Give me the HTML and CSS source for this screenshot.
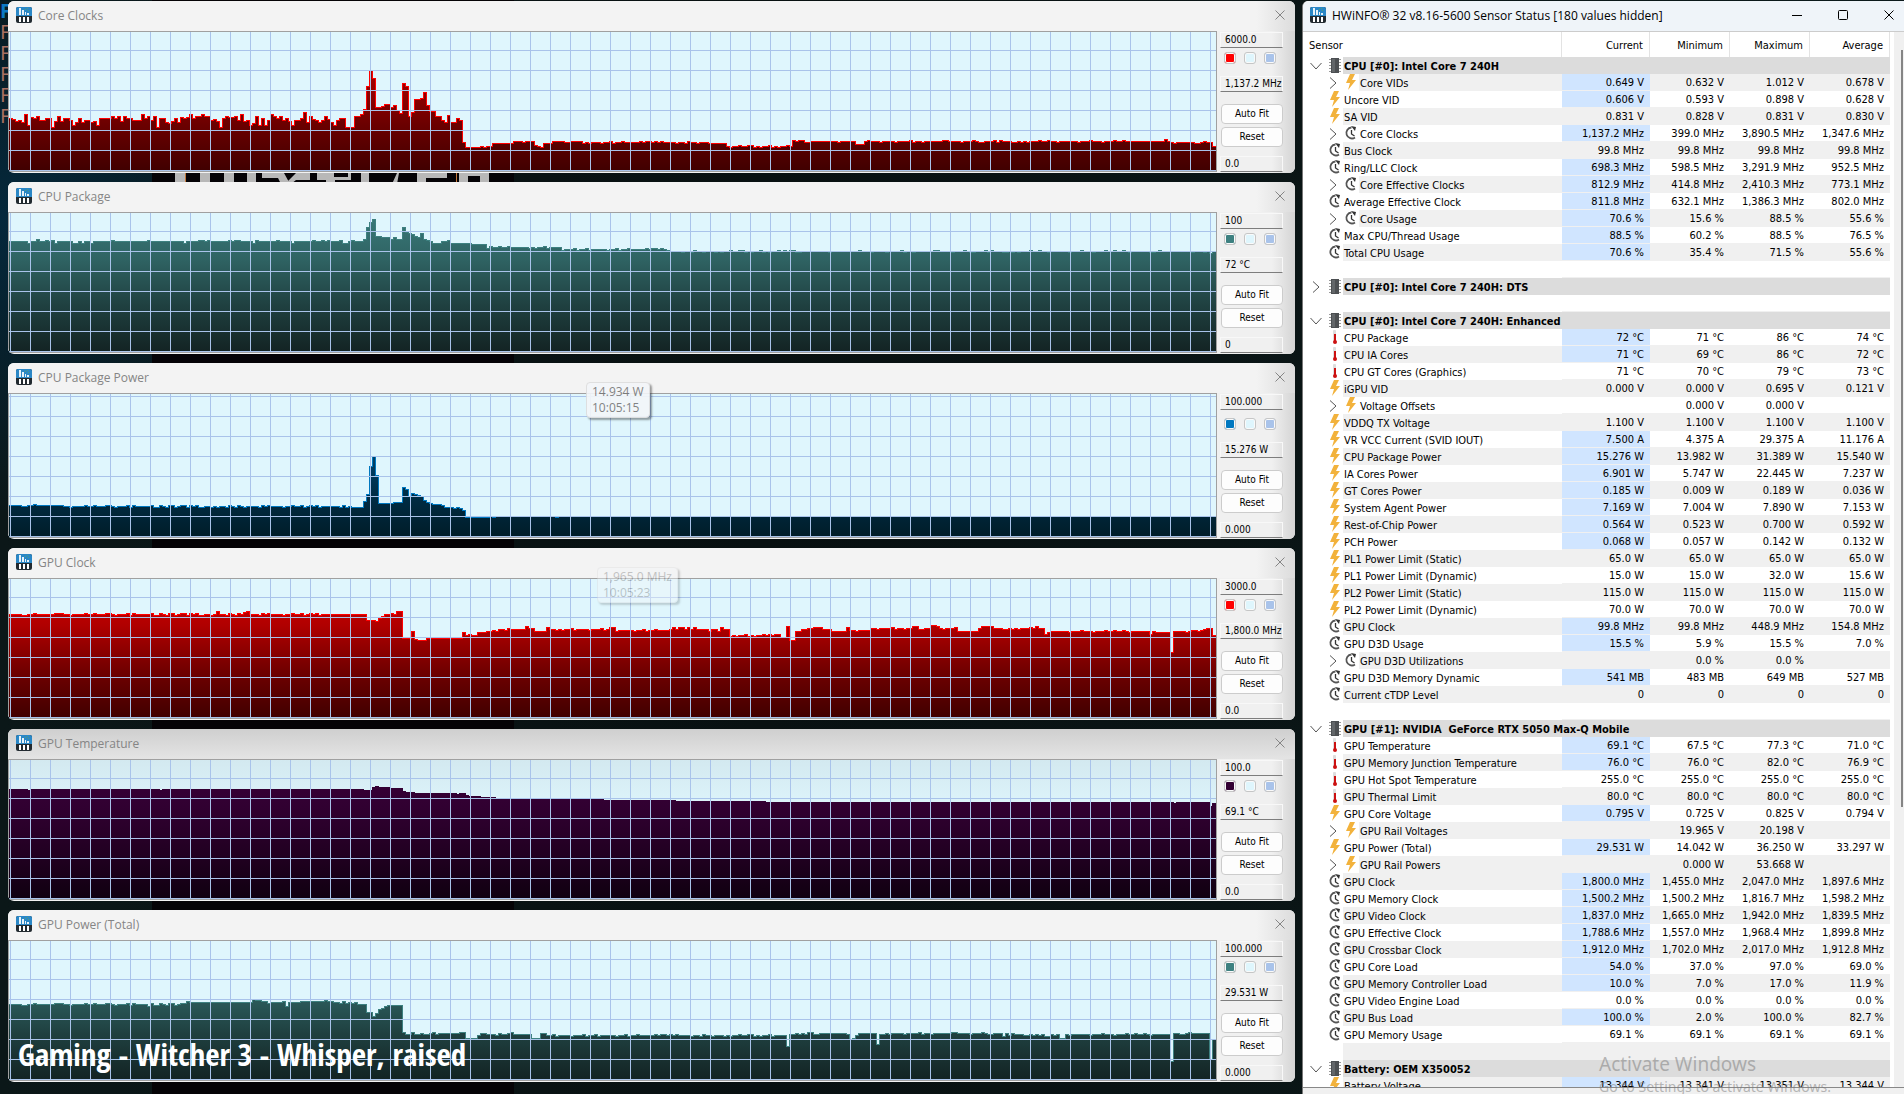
FILE: index.html
```html
<!DOCTYPE html>
<html lang="en">
<head>
  <meta charset="UTF-8">
  <title>HWiNFO Sensor Status</title>
  <meta name="viewport" content="width=device-width, initial-scale=1.0">
  <link rel="stylesheet" href="styles.css">
</head>
<body>
  <svg class="defs" aria-hidden="true">
    <symbol id="i-app" viewBox="0 0 16 16">
      <rect width="16" height="16" rx="2" fill="#222a30"/>
      <path d="M2 0h12a2 2 0 0 1 2 2v7H0V2a2 2 0 0 1 2-2z" fill="#2a87c6"/>
      <path d="M3 1h2v7H3zM6 3h2v5H6zM9 5h1v3H9zM11 6h2v2h-2z" fill="#e6f2fa"/>
      <path d="M3 10h2v5H3zM7 10h2v5H7zM11 10h2v5h-2z" fill="#fff"/>
      <path d="M9 2h1v1H9zM12 3h1v1h-1zM11 1h1v1h-1z" fill="#4f9e7a"/>
    </symbol>
    <symbol id="i-close" viewBox="0 0 10 10"><path d="M0.5 0.5l9 9M9.5 0.5l-9 9" fill="none" stroke="currentColor"/></symbol>
    <symbol id="i-min" viewBox="0 0 10 10"><path d="M0 5.5h10" fill="none" stroke="currentColor"/></symbol>
    <symbol id="i-max" viewBox="0 0 10 10"><rect x="0.5" y="0.5" width="9" height="9" rx="1" fill="none" stroke="currentColor"/></symbol>
    <symbol id="i-right" viewBox="0 0 12 12"><path d="M3 0.5l6 5.5-6 5.5" fill="none" stroke="#555"/></symbol>
    <symbol id="i-down" viewBox="0 0 12 12"><path d="M0.5 3l5.500 6 5.500-6" fill="none" stroke="#555"/></symbol>
    <symbol id="i-chip" viewBox="0 0 16 16">
      <path d="M2 2h12v1H2zM2 5h12v1H2zM2 8h12v1H2zM2 11h12v1H2zM2 14h12v1H2z" fill="#999"/>
      <rect x="4" y="1" width="8" height="15" fill="#4c4f52"/>
      <path d="M5 2h3v13H5z" fill="#626669"/>
    </symbol>
    <symbol id="i-volt" viewBox="0 0 16 16"><path d="M7 0h5L9 6h4L5 16l2-7H3z" fill="#f2b23c"/></symbol>
    <symbol id="i-clock" viewBox="0 0 16 16">
      <path d="M8.500 2.500A5.500 5.500 0 1 0 12 12.500" fill="none" stroke="#555" stroke-width="1.800"/>
      <path d="M8 1l5 1-1 4z" fill="#333"/>
      <path d="M8.500 5v4l3 2" fill="none" stroke="#333" stroke-width="1.300"/>
    </symbol>
    <symbol id="i-temp" viewBox="0 0 16 16">
      <rect x="6" y="1" width="3" height="11" rx="1" fill="#ddd"/>
      <path d="M7 5h2v7H7z" fill="#c11"/><circle cx="8" cy="13" r="2" fill="#c11"/>
    </symbol>
  </svg>

  <div class="wallpaper" aria-hidden="true">
    <div class="terminal"><span class="prompt">F</span><span>F</span><span>F</span><span>F</span><span>F</span><span>F</span></div>
    <svg class="lettering" viewBox="0 0 340 12">
      <path fill="#b8b8b8" d="M22 0h11v12H22zM47 0h10v12H47zM71 0h10v12H71zM94 0h9v12h-9zM109 1h22l6 11h-9l-3-6h-16zM143 1h14v7h-14l-5 4h-6zM164 1h17v4h14V1h3v7h-16v4h-9V8h-9zM208 0h8v12h-8zM246 1h-2l-5 11h5zM264 1h30v5h-21v6h-9zM306 0h30v12h-9V4h-12v8h-9z"/>
      <path fill="#c57a3c" d="M303 0h1v12h-1zM32 0h1v12h-1z"/>
    </svg>
  </div>

  <main class="desktop">
    <div class="graphs" id="graphs"></div>

    <section class="sensors">
      <header class="sensors-title">
        <svg class="app-icon"><use href="#i-app"/></svg>
        <h1>HWiNFO® 32 v8.16-5600 Sensor Status [180 values hidden]</h1>
        <button class="win-btn" aria-label="Minimize"><svg><use href="#i-min"/></svg></button>
        <button class="win-btn" aria-label="Maximize"><svg><use href="#i-max"/></svg></button>
        <button class="win-btn" aria-label="Close"><svg><use href="#i-close"/></svg></button>
      </header>
      <div class="sensors-body">
        <div class="list">
          <table>
            <thead>
              <tr><th>Sensor</th><th>Current</th><th>Minimum</th><th>Maximum</th><th>Average</th></tr>
            </thead>
            <tbody id="rows"></tbody>
          </table>
        </div>
        <div class="scrollbar"><div class="thumb"></div></div>
      </div>
      <div class="sensors-bottom"></div>
    </section>
  </main>

  <div class="tip tip-power">14.934 W<br>10:05:15</div>
  <div class="tip tip-clock">1,965.0 MHz<br>10:05:23</div>
  <div class="caption">Gaming - Witcher 3 - Whisper, raised</div>
  <div class="activate"><strong>Activate Windows</strong><span>Go to Settings to activate Windows.</span></div>

  <script>
    // Series: heights in pixels, one per 3px column.
    // "50x4" repeats, "50x4~2" repeats with noise, "@119" jumps to a column.
    const graphs = [
      {
        title: 'Core Clocks', max: '6000.0', value: '1,137.2 MHz', min: '0.0', color: '#ff0000',
        stops: ['#d80000', '#a00000', '#6b0000', '#400000'],
        data: '52 51 49 50 48 56 45 53 52 54 50 50 52 52 43 49 54 49 52 52 50 45 48 52 48 50 50 48 49 45 52x4 54 52 54 49 54 52x2 50x3 56 52 54 50 54 43 52x2 48 47 49 52 48 53 52 53 56 52 54x2 56 54x2 50 51 49 43 52 54 53x2 54 50 56 49 50 45 47 54 45 52 45 50 56 54 52 54 50 52 49 45 50x2 52 58 48 54 51 50 48 50 54 51 48 45 50 52x2 43 @114 43 54 54 56 56 @118 61 84 100 92 63x2 64 66x2 63 65 60 57x2 @131 87 84 54 58 71x2 72 78 65 59x2 54x2 50 48 55 48x2 52 50 48 @151 28 23x5 24 23 24x2 27x7 29x3 28 29x3 25 24 23 27x3 29x4 28x2 29x4 27 28 27 28x40~1 @239 24x22~1 @261 29x21~1 26x3 29x88~1 @385 31 28x14~1 @401 24 24'
      },
      {
        title: 'CPU Package', max: '100', value: '72 °C', min: '0', color: '#3d8080',
        stops: ['#3a7a7a', '#2f6363', '#1f4040', '#132323'],
        data: '110x6 108 110x2 112 110x2 111 110 111 108 110x5 108x2 110 108 110x2 108 110x6 111 110x11 111 110x11 108 110x4 111x2 110 111 110x6 111 110 111x2 110x4 108 111 110x6 111 110x4 108 110x6 111 110x2 111 110 111 110x3 111 108x2 110 111 110x2 @118 112 124 129 132 115 115 114x3 112 114 112x3 @131 124 119 118 117 115 114 118 112 111 110 108x3 110x2 111 108x7 107x5 104x25~1 102x35~1 100x207~1 @400 98 100'
      },
      {
        title: 'CPU Package Power', max: '100.000', value: '15.276 W', min: '0.000', color: '#0078c0', tall: true,
        stops: ['#0070b4', '#004a78', '#002f49', '#001c28'],
        data: '31x15~1 30x100~1 @118 35 42 70 80 61 33x5 34x2 @131 49 47 40 43 42 41 40 36 34 33 32x3 31 29x3 28 29 28 26 @152 19x8 20 19 20x20 19 20x220'
      },
      {
        title: 'GPU Clock', max: '3000.0', value: '1,800.0 MHz', min: '0.0', color: '#ff0000',
        stops: ['#d80000', '#b00000', '#700000', '#400000'],
        data: '103x60~1 104 103x8~1 106 103x8~1 105 106 103x30~1 @119 97x3 96 99 101 103x2 104 103 106x2 @131 79x3 86 78 77x3 79x12 85 82 83 82x2 85x3 86x2 87 86 88x2 87 89 88x5 91 89x2 86x4 90 88x20~1 90x2 87x18~1 88x34~2 @240 82x17~1 80 80 91 77 77 86x2 88x2 89x2 90x3 88x3 86x5 90 87x5~1 @287 89x14~1 91x2 88x4~1 92x2 91 89x6~1 86x4 @323 89 91x4 89x14~1 91 89x2 83 86x36~1 @380 83x1 85x6~1 @387 65 86x6~1 87x5~1 @399 89 89 82'
      },
      {
        title: 'GPU Temperature', max: '100.0', value: '69.1 °C', min: '0.0', color: '#330033', dim: true,
        stops: ['#3a003a', '#310031', '#220022', '#100010'],
        data: '109x6 108 109x43 108 109x67 @118 108x3 111 112 111x4 110x3 @131 107 106x3 105x14 104 105x2 103 102x4 101x5 @162 100x18 99x18 98x24 97x30 96x140 @388 95 96x11 @400 92 95'
      },
      {
        title: 'GPU Power (Total)', max: '100.000', value: '29.531 W', min: '0.000', color: '#3d8080',
        stops: ['#3a7a7a', '#2f6363', '#1f4040', '#132323'],
        data: '75x46~1 73 75x12~1 78 77x21~0 80 79x2 78x2 76 77x4~1 78 73 77x4 78x8 79 78x2 77x8~1 75 @119 67x2 63 66 70 71 73 74x4 @130 74 47 45x2 47 45x2 46x14~1 @152 41x4 44 45x10~1 47 45x6 41x3 46x2 44x77~1 @259 33 45x6~1 46x13~1 @279 45 40 41 44 46x6~1 35 45x2~1 46x38~1 @331 43 45x13~1 43x2 45 44 45 41x2 45x4~1 45x28~1 @387 18 46x12~1 @400 20 40'
      }
    ];

    const COLS = 403;

    function expand(data) {
      const out = [];
      let seed = 7;
      for (const token of data.split(' ')) {
        if (token[0] === '@') {
          const col = Number(token.slice(1));
          const last = out[out.length - 1];
          while (out.length < col) out.push(last);
          out.length = col;
          continue;
        }
        const [, h, n, noise] = token.match(/^(\d+)(?:x(\d+))?(?:~(\d+))?$/);
        for (let i = 0; i < Number(n || 1); i++) {
          seed = (seed * 1103515245 + 12345) % 2147483648;
          const r = Math.floor(seed / 65536) % 6;
          const d = r === 0 ? -1 : r === 1 ? 1 : 0;
          out.push(Number(h) + d * Number(noise || 0));
        }
      }
      while (out.length < COLS) out.push(out[out.length - 1]);
      return out.slice(0, COLS);
    }

    function gridLines(height) {
      let d = '';
      for (let x = 1; x < 1207; x += 20) d += `M${x} 0h1v${height}h-1z`;
      for (let y = height - 1; y >= 0; y -= 20) d += `M0 ${y}h1207v1H0z`;
      return d;
    }

    function plot(g, i) {
      const height = g.tall ? 143 : 139;
      const base = height - 1;
      let line = '';
      expand(g.data).forEach((h, c) => {
        const x = c * 3;
        line += `${c ? 'L' : 'M'}${x} ${base - h + 0.5}H${x + 3}`;
      });
      const stops = g.stops.map((s, n) => `<stop offset="${n / 3}" stop-color="${s}"/>`).join('');
      return `<svg class="plot" viewBox="0 0 1207 ${height}" preserveAspectRatio="none" height="${height}" role="img" aria-label="${g.title}">
        <linearGradient id="g${i}" gradientUnits="userSpaceOnUse" x1="0" y1="0" x2="0" y2="${height}">${stops}</linearGradient>
        <path d="${line}V${height}H0z" fill="url(#g${i})"/>
        <path d="${line}" fill="none" stroke="${g.color}"/>
        <path d="${gridLines(height)}" fill="#a9c3ea" fill-rule="nonzero"/>
      </svg>`;
    }

    document.getElementById('graphs').innerHTML = graphs.map((g, i) => `
      <section class="graph${g.dim ? ' graph-dim' : ''}">
        <header class="graph-title">
          <svg class="app-icon"><use href="#i-app"/></svg>
          <h2>${g.title}</h2>
          <button class="graph-close" aria-label="Close ${g.title}"><svg><use href="#i-close"/></svg></button>
        </header>
        <div class="graph-body">
          <div class="plot-frame">${plot(g, i)}</div>
          <div class="side">
            <input class="field" aria-label="${g.title} maximum" value="${g.max}">
            <div class="swatches">
              <button style="background: ${g.color}" aria-label="Graph color"></button>
              <button class="swatch-bg" aria-label="Background color"></button>
              <button class="swatch-grid" aria-label="Grid color"></button>
            </div>
            <input class="field value" aria-label="${g.title} value" value="${g.value}" readonly>
            <button class="btn">Auto Fit</button>
            <button class="btn reset">Reset</button>
            <input class="field low" aria-label="${g.title} minimum" value="${g.min}">
          </div>
        </div>
      </section>`).join('');

    // icon | name | current | minimum | maximum | average
    // "+" = expandable, "*" = current value changed, "#" = group, "" = spacer
    const sensors = `#down|CPU [#0]: Intel Core 7 240H
+*volt|Core VIDs|0.649 V|0.632 V|1.012 V|0.678 V
*volt|Uncore VID|0.606 V|0.593 V|0.898 V|0.628 V
volt|SA VID|0.831 V|0.828 V|0.831 V|0.830 V
+*clock|Core Clocks|1,137.2 MHz|399.0 MHz|3,890.5 MHz|1,347.6 MHz
clock|Bus Clock|99.8 MHz|99.8 MHz|99.8 MHz|99.8 MHz
*clock|Ring/LLC Clock|698.3 MHz|598.5 MHz|3,291.9 MHz|952.5 MHz
+*clock|Core Effective Clocks|812.9 MHz|414.8 MHz|2,410.3 MHz|773.1 MHz
*clock|Average Effective Clock|811.8 MHz|632.1 MHz|1,386.3 MHz|802.0 MHz
+*clock|Core Usage|70.6 %|15.6 %|88.5 %|55.6 %
*clock|Max CPU/Thread Usage|88.5 %|60.2 %|88.5 %|76.5 %
*clock|Total CPU Usage|70.6 %|35.4 %|71.5 %|55.6 %

#right|CPU [#0]: Intel Core 7 240H: DTS

#down|CPU [#0]: Intel Core 7 240H: Enhanced
*temp|CPU Package|72 °C|71 °C|86 °C|74 °C
*temp|CPU IA Cores|71 °C|69 °C|86 °C|72 °C
temp|CPU GT Cores (Graphics)|71 °C|70 °C|79 °C|73 °C
volt|iGPU VID|0.000 V|0.000 V|0.695 V|0.121 V
+volt|Voltage Offsets||0.000 V|0.000 V|
volt|VDDQ TX Voltage|1.100 V|1.100 V|1.100 V|1.100 V
*volt|VR VCC Current (SVID IOUT)|7.500 A|4.375 A|29.375 A|11.176 A
*volt|CPU Package Power|15.276 W|13.982 W|31.389 W|15.540 W
*volt|IA Cores Power|6.901 W|5.747 W|22.445 W|7.237 W
*volt|GT Cores Power|0.185 W|0.009 W|0.189 W|0.036 W
*volt|System Agent Power|7.169 W|7.004 W|7.890 W|7.153 W
*volt|Rest-of-Chip Power|0.564 W|0.523 W|0.700 W|0.592 W
*volt|PCH Power|0.068 W|0.057 W|0.142 W|0.132 W
volt|PL1 Power Limit (Static)|65.0 W|65.0 W|65.0 W|65.0 W
volt|PL1 Power Limit (Dynamic)|15.0 W|15.0 W|32.0 W|15.6 W
volt|PL2 Power Limit (Static)|115.0 W|115.0 W|115.0 W|115.0 W
volt|PL2 Power Limit (Dynamic)|70.0 W|70.0 W|70.0 W|70.0 W
*clock|GPU Clock|99.8 MHz|99.8 MHz|448.9 MHz|154.8 MHz
*clock|GPU D3D Usage|15.5 %|5.9 %|15.5 %|7.0 %
+clock|GPU D3D Utilizations||0.0 %|0.0 %|
*clock|GPU D3D Memory Dynamic|541 MB|483 MB|649 MB|527 MB
clock|Current cTDP Level|0|0|0|0

#down|GPU [#1]: NVIDIA  GeForce RTX 5050 Max-Q Mobile
*temp|GPU Temperature|69.1 °C|67.5 °C|77.3 °C|71.0 °C
*temp|GPU Memory Junction Temperature|76.0 °C|76.0 °C|82.0 °C|76.9 °C
temp|GPU Hot Spot Temperature|255.0 °C|255.0 °C|255.0 °C|255.0 °C
temp|GPU Thermal Limit|80.0 °C|80.0 °C|80.0 °C|80.0 °C
*volt|GPU Core Voltage|0.795 V|0.725 V|0.825 V|0.794 V
+volt|GPU Rail Voltages||19.965 V|20.198 V|
*volt|GPU Power (Total)|29.531 W|14.042 W|36.250 W|33.297 W
+volt|GPU Rail Powers||0.000 W|53.668 W|
*clock|GPU Clock|1,800.0 MHz|1,455.0 MHz|2,047.0 MHz|1,897.6 MHz
*clock|GPU Memory Clock|1,500.2 MHz|1,500.2 MHz|1,816.7 MHz|1,598.2 MHz
*clock|GPU Video Clock|1,837.0 MHz|1,665.0 MHz|1,942.0 MHz|1,839.5 MHz
*clock|GPU Effective Clock|1,788.6 MHz|1,557.0 MHz|1,968.4 MHz|1,899.8 MHz
*clock|GPU Crossbar Clock|1,912.0 MHz|1,702.0 MHz|2,017.0 MHz|1,912.8 MHz
*clock|GPU Core Load|54.0 %|37.0 %|97.0 %|69.0 %
*clock|GPU Memory Controller Load|10.0 %|7.0 %|17.0 %|11.9 %
clock|GPU Video Engine Load|0.0 %|0.0 %|0.0 %|0.0 %
*clock|GPU Bus Load|100.0 %|2.0 %|100.0 %|82.7 %
clock|GPU Memory Usage|69.1 %|69.1 %|69.1 %|69.1 %

#down|Battery: OEM X350052
*volt|Battery Voltage|13.344 V|13.341 V|13.351 V|13.344 V`;

    const icon = (name) => `<svg class="icon"><use href="#i-${name}"/></svg>`;

    document.getElementById('rows').innerHTML = sensors.split('\n').map((line, k) => {
      // a hidden row inside the GPU group flips the striping
      const odd = k < 48 ? k % 2 === 1 : k % 2 === 0;
      const cls = odd ? 'odd' : '';
      if (!line) return `<tr class="${cls}"><td><div class="name"><span class="gutter"></span><span class="label"></span></div></td><td></td><td></td><td></td><td></td></tr>`;
      const [key, name, ...values] = line.split('|');
      if (key[0] === '#') {
        return `<tr class="group"><td colspan="5"><div class="name"><button class="toggle" aria-label="Toggle group">${icon(key.slice(1))}</button>${icon('chip')}<span class="label">${name}</span></div></td></tr>`;
      }
      const [, plus, star, type] = key.match(/^(\+?)(\*?)(\w+)$/);
      const toggle = plus ? `<button class="toggle sub" aria-label="Expand ${name}">${icon('right')}</button>` : '';
      const cells = values.map((v, n) => `<td${n === 0 && star ? ' class="changed"' : ''}>${v}</td>`).join('');
      return `<tr class="${cls}"><td><div class="name"><span class="indent"></span>${toggle}${icon(type)}<span class="label">${name}</span></div></td>${cells}</tr>`;
    }).join('');
  </script>
</body>
</html>
```

FILE: styles.css
```css
* {
  box-sizing: border-box;
}
body {
  margin: 0;
  height: 100vh;
  overflow: hidden;
  position: relative;
  background-color: #060a0c;
  font-family: "DejaVu Sans Condensed", "Noto Sans", sans-serif;
  font-size: 11px;
  color: #000;
}
h1, h2 {
  margin: 0;
  flex: 1;
  font-family: "Open Sans", "Noto Sans", sans-serif;
  font-size: 12px;
  font-weight: 400;
}
button {
  padding: 0;
  border: none;
  background: none;
  font: inherit;
  color: inherit;
}
svg {
  display: block;
}
.defs {
  position: absolute;
  width: 0;
  height: 0;
}

/* wallpaper */
.wallpaper {
  position: absolute;
  inset: 0;
  background:
    linear-gradient(to right, transparent 8%, #050306 8%, #050306 27%, transparent 27%),
    radial-gradient(circle at 0 20%, #04283c, transparent 14%),
    linear-gradient(to right, #0b1718, #081011 40%, #0c1a1b);
}
.terminal {
  position: absolute;
  left: 0;
  top: 0;
  display: flex;
  flex-direction: column;
  font-family: "Noto Sans", sans-serif;
  font-size: 20px;
  line-height: 21px;
  color: #a87062;
}
.prompt {
  color: #0d79c4;
  font-weight: 700;
}
.lettering {
  position: absolute;
  left: 153px;
  top: 172px;
  width: 340px;
  height: 12px;
}

/* layout */
.desktop {
  position: relative;
  display: flex;
  gap: 7px;
  height: 100%;
  padding: 1px 0 0 8px;
}
.graphs {
  flex: 1;
  min-width: 0;
  display: flex;
  flex-direction: column;
  gap: 9px;
}

/* graph windows */
.graph {
  background-color: #f3f3f3;
  border-radius: 6px;
  overflow: hidden;
}
.graph-title {
  display: flex;
  align-items: center;
  height: 30px;
  padding: 0 10px 2px 8px;
  gap: 6px;
  color: #858585;
  background: linear-gradient(to right, #f3f3f3 97%, #dcdcdc);
}
.graph-dim .graph-title {
  background: linear-gradient(#cfcfcf, #e4e4e4);
}
.app-icon {
  width: 16px;
  height: 16px;
}
.graph-close svg,
.win-btn svg {
  width: 10px;
  height: 10px;
}
.graph-body {
  display: flex;
}
.plot-frame {
  flex: 1;
  min-width: 0;
  margin-bottom: 1px;
  border: 1px solid #a0a0a0;
  background-color: #dff6fd;
}
.graph-dim .plot-frame {
  background: linear-gradient(#d3e9f0, #dff6fd 40%);
}
.plot {
  width: 100%;
  shape-rendering: crispEdges;
}
.side {
  flex: 0 0 78px;
  display: flex;
  flex-direction: column;
  padding: 1px 12px 1px 3px;
  background: linear-gradient(to right, #f0f0f0 70%, #d4d4d4);
  font-size: 10px;
}
.field {
  width: 100%;
  height: 16px;
  padding: 0 0 1px 4px;
  border: 1px solid #f8f8f8;
  border-bottom-color: #7d7d7d;
  background-color: transparent;
  font: inherit;
}
.swatches {
  display: flex;
  gap: 8px;
  margin-top: auto;
  padding-left: 4px;
}
.swatches button {
  width: 12px;
  height: 12px;
  border: 1px solid #c6c6c6;
  border-radius: 3px;
  box-shadow: inset 0 0 0 1px #fafafa;
}
.swatches .swatch-bg {
  background-color: #dff6fd;
}
.swatches .swatch-grid {
  background-color: #a9c3ea;
}
.value {
  margin-top: 12px;
}
.btn {
  height: 20px;
  margin: 12px 0 0 1px;
  padding-bottom: 1px;
  border: 1px solid #ccc;
  border-radius: 4px;
  background-color: #fdfdfd;
}
.reset {
  margin-top: 3px;
}
.low {
  margin-top: 9px;
}

/* sensor window */
.sensors {
  flex: 0 0 602px;
  display: flex;
  flex-direction: column;
  min-height: 0;
  border-left: 1px solid #777;
  border-radius: 6px 0 0 0;
  background-color: #fff;
  overflow: hidden;
}
.sensors-title {
  display: flex;
  align-items: center;
  flex: 0 0 31px;
  gap: 6px;
  padding: 0 10px 2px 7px;
  border-bottom: 1px solid #ccc;
  background-color: #eff4f9;
}
.win-btn {
  margin-left: 30px;
}
.sensors-body {
  flex: 1;
  min-height: 0;
  display: flex;
}
.list {
  flex: 1;
  overflow: hidden;
}
.scrollbar {
  flex: 0 0 14px;
  padding-top: 18px;
  border-left: 4px solid #fff;
  background-color: #f0f0f0;
}
.thumb {
  width: 2px;
  height: 73%;
  margin-left: 7px;
  background-color: #858585;
}
.sensors-bottom {
  flex: 0 0 7px;
  border-top: 1px solid #888;
  background-color: #f0f0f0;
}
table {
  width: 100%;
  table-layout: fixed;
  border-collapse: separate;
  border-spacing: 0;
}
th {
  height: 25px;
  padding: 2px 6px 0;
  border-right: 1px solid #e3e3e3;
  font-weight: 400;
  text-align: right;
  width: 80px;
}
th:first-child {
  width: auto;
  text-align: left;
}
th:nth-child(2) {
  width: 88px;
}
td {
  height: 17px;
  padding: 2px 6px 0 0;
  border-bottom: 1px solid #f0f0f0;
  line-height: 14px;
  text-align: right;
  white-space: pre;
}
td:first-child {
  padding: 0;
  border-bottom: none;
}
.odd td:not(:first-child),
.odd .label {
  background-color: #f0f0f0;
}
.odd .changed.changed,
.changed {
  background-color: #d0e5ff;
}
.name {
  display: flex;
  height: 17px;
  text-align: left;
}
.indent {
  width: 24px;
}
.gutter {
  width: 40px;
}
.icon {
  flex: none;
  width: 16px;
  height: 16px;
}
.label {
  flex: 1;
  padding: 2px 0 0 1px;
  line-height: 15px;
}
.toggle {
  width: 24px;
  padding-left: 7px;
}
.toggle .icon {
  width: 12px;
  height: 12px;
}
.sub {
  width: 16px;
  padding-left: 0;
}
.group .label {
  background-color: #dcdcdc;
  font-weight: 700;
}

/* overlays */
.tip {
  position: absolute;
  padding: 1px 5px;
  border: 1px solid #ddd;
  border-radius: 4px;
  background-color: #f4f6f9;
  box-shadow: 2px 2px 2px rgba(0, 0, 0, 0.4);
  font-family: "Open Sans", "Noto Sans", sans-serif;
  font-size: 12px;
  line-height: 16px;
  white-space: nowrap;
  color: #777;
}
.tip-power {
  left: 586px;
  top: 382px;
  opacity: 0.9;
}
.tip-clock {
  left: 597px;
  top: 567px;
  opacity: 0.4;
}
.caption {
  position: absolute;
  left: 18px;
  bottom: 18px;
  font-family: "Open Sans Condensed", "Liberation Sans Narrow", sans-serif;
  font-size: 31px;
  font-weight: 300;
  line-height: 44px;
  color: #fff;
}
.activate {
  position: absolute;
  left: 1599px;
  bottom: -3px;
  display: flex;
  flex-direction: column;
  font-family: "Noto Sans", sans-serif;
  font-size: 14px;
  line-height: 20px;
  color: rgba(120, 120, 120, 0.5);
}
.activate strong {
  font-size: 19px;
  line-height: 26px;
  font-weight: 400;
}
```
